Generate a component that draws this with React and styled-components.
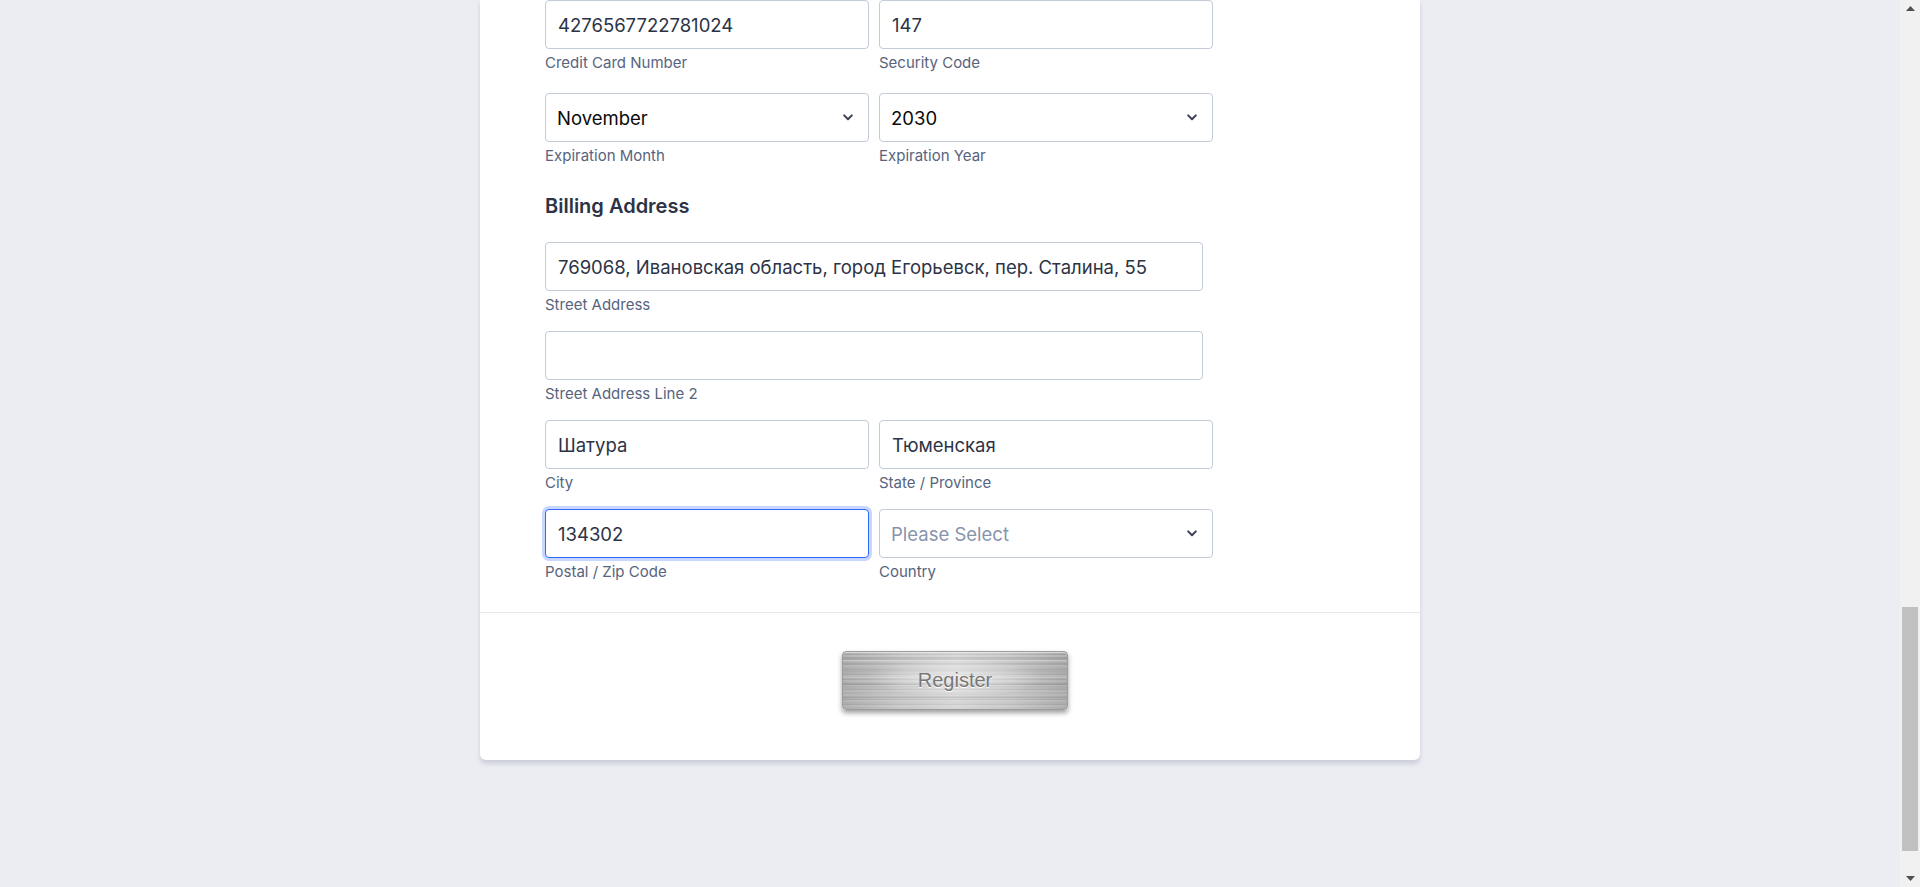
import React from 'react';
import styled, { createGlobalStyle } from 'styled-components';

const GlobalStyle = createGlobalStyle`
  html, body {
    margin: 0;
    height: 100%;
    overflow: hidden;
  }
  body {
    font-family: Inter, 'Noto Sans', sans-serif;
    color: #2c3345;
  }
  * {
    box-sizing: border-box;
  }
`;

const Screen = styled.div`
  display: flex;
  height: 100vh;
  overflow: hidden;
`;

const Main = styled.main`
  flex: 1;
  min-width: 0;
  background: #ecedf3;
`;

const Card = styled.form`
  width: 940px;
  margin: 0 auto;
  background: #fff;
  border-radius: 0 0 6px 6px;
  box-shadow: 0 4px 4px rgba(87, 100, 126, 0.21);
`;

const Section = styled.div`
  padding: 0 65px 14px;
`;

const SectionHeading = styled.h3`
  margin: 28px 0 23px;
  font-size: 20px;
  line-height: 26px;
  font-weight: 600;
  color: #2c3345;
`;

const Grid = styled.div`
  display: grid;
  grid-template-columns: 324px 334px;
  column-gap: 10px;
  row-gap: ${({ $gap }) => $gap}px;
  margin-bottom: ${({ $gap }) => $gap}px;
`;

const FieldBox = styled.div`
  display: flex;
  flex-direction: column;
  grid-column: ${({ $wide }) => ($wide ? '1 / -1' : 'auto')};
  width: ${({ $wide }) => ($wide ? '658px' : 'auto')};
`;

const TextInput = styled.input`
  width: 100%;
  height: 49px;
  padding: 0 12px;
  border: 1px solid ${({ $focused }) => ($focused ? '#2e69ff' : '#c3cad8')};
  border-radius: 4px;
  box-shadow: ${({ $focused }) => ($focused ? '0 0 0 3px #c8d7ff' : 'none')};
  background: #fff;
  outline: none;
  font-family: Inter, 'Noto Sans', sans-serif;
  font-size: 18.5px;
  color: #2c3345;
`;

const SelectWrap = styled.div`
  position: relative;
`;

const Select = styled.select`
  width: 100%;
  height: 49px;
  padding: 0 36px 0 11px;
  border: 1px solid #c3cad8;
  border-radius: 4px;
  background: #fff;
  appearance: none;
  outline: none;
  font-family: Inter, 'Noto Sans', sans-serif;
  font-size: 18.5px;
  color: ${({ $empty }) => ($empty ? '#8894ab' : '#0a0a0a')};
`;

const Chevron = styled.svg`
  position: absolute;
  right: 16px;
  top: 21px;
  pointer-events: none;
`;

const SubLabel = styled.span`
  margin-top: 5px;
  font-size: 15px;
  line-height: 18px;
  color: #57647e;
`;

const Footer = styled.div`
  display: flex;
  justify-content: center;
  padding: 38px 0 50px 10px;
  border-top: 1px solid #e6e7ee;
`;

const RegisterButton = styled.button`
  width: 226px;
  height: 59px;
  border: 1px solid #9c9c9c;
  border-radius: 4px;
  font-family: 'Liberation Sans', Arial, sans-serif;
  font-size: 20px;
  color: #777;
  text-shadow: 0 1px 0 #fff;
  cursor: pointer;
  background:
    radial-gradient(ellipse 55% 50% at 50% 45%, rgba(255, 255, 255, 0.5), rgba(255, 255, 255, 0) 70%),
    repeating-linear-gradient(180deg, rgba(0, 0, 0, 0) 0 2px, rgba(0, 0, 0, 0.05) 2px 3px, rgba(255, 255, 255, 0.1) 3px 5px),
    repeating-linear-gradient(180deg, rgba(0, 0, 0, 0) 0 5px, rgba(0, 0, 0, 0.07) 5px 7px, rgba(0, 0, 0, 0) 7px 13px),
    repeating-linear-gradient(180deg, rgba(255, 255, 255, 0) 0 8px, rgba(255, 255, 255, 0.22) 8px 9px, rgba(255, 255, 255, 0) 9px 17px),
    repeating-linear-gradient(180deg, rgba(0, 0, 0, 0) 0 11px, rgba(0, 0, 0, 0.06) 11px 12px, rgba(0, 0, 0, 0) 12px 23px),
    linear-gradient(90deg, #acacac, #c6c6c6 25%, #d6d6d6 50%, #c6c6c6 75%, #aaaaaa);
  box-shadow: 0 3px 5px rgba(0, 0, 0, 0.38), inset 0 1px 0 rgba(255, 255, 255, 0.5);
`;

/* page scrollbar, drawn since the page is shown scrolled down */
const ScrollRail = styled.div`
  display: flex;
  flex-direction: column;
  width: 20px;
  background: #f1f1f1;
`;

const RailButton = styled.div`
  display: flex;
  align-items: center;
  justify-content: center;
  height: 17px;
`;

const RailTrack = styled.div`
  flex: 1;
  padding: ${({ $offset }) => $offset}px 2px 0;
`;

const RailThumb = styled.div`
  height: ${({ $length }) => $length}px;
  background: #c1c1c1;
`;

const months = ['January', 'February', 'March', 'April', 'May', 'June', 'July', 'August', 'September', 'October', 'November', 'December'];
const years = ['2025', '2026', '2027', '2028', '2029', '2030', '2031', '2032'];

const SelectField = ({ value, options, placeholder }) => (
  <SelectWrap>
    <Select defaultValue={value || ''} $empty={!value}>
      {placeholder && <option value=''>{placeholder}</option>}
      {options.map(o => (
        <option key={o} value={o}>
          {o}
        </option>
      ))}
    </Select>
    <Chevron width='10' height='7' viewBox='0 0 10 7'>
      <path d='M1.2 1.4L5 5.2l3.8-3.8' fill='none' stroke='#3b4254' strokeWidth='2' strokeLinecap='round' strokeLinejoin='round' />
    </Chevron>
  </SelectWrap>
);

const Field = ({ sub, wide, children }) => (
  <FieldBox $wide={wide}>
    {children}
    {sub && <SubLabel>{sub}</SubLabel>}
  </FieldBox>
);

const Arrow = ({ down }) => (
  <svg width='9' height='5' viewBox='0 0 9 5'>
    <path d={down ? 'M0 0L4.5 5L9 0z' : 'M0 5L4.5 0L9 5z'} fill='#505050' />
  </svg>
);

const App = () => (
  <Screen>
    <GlobalStyle />
    <Main>
      <Card onSubmit={e => e.preventDefault()}>
        <Section>
          <Grid $gap={21}>
            <Field sub='Credit Card Number'>
              <TextInput defaultValue='4276567722781024' />
            </Field>
            <Field sub='Security Code'>
              <TextInput defaultValue='147' />
            </Field>
            <Field sub='Expiration Month'>
              <SelectField value='November' options={months} />
            </Field>
            <Field sub='Expiration Year'>
              <SelectField value='2030' options={years} />
            </Field>
          </Grid>

          <SectionHeading>Billing Address</SectionHeading>
          <Grid $gap={17}>
            <Field sub='Street Address' wide>
              <TextInput defaultValue='769068, Ивановская область, город Егорьевск, пер. Сталина, 55' />
            </Field>
            <Field sub='Street Address Line 2' wide>
              <TextInput />
            </Field>
            <Field sub='City'>
              <TextInput defaultValue='Шатура' />
            </Field>
            <Field sub='State / Province'>
              <TextInput defaultValue='Тюменская' />
            </Field>
            <Field sub='Postal / Zip Code'>
              <TextInput defaultValue='134302' $focused />
            </Field>
            <Field sub='Country'>
              <SelectField placeholder='Please Select' options={['Russia', 'Belarus', 'Kazakhstan']} />
            </Field>
          </Grid>
        </Section>

        <Footer>
          <RegisterButton type='submit'>Register</RegisterButton>
        </Footer>
      </Card>
    </Main>
    <ScrollRail>
      <RailButton>
        <Arrow />
      </RailButton>
      <RailTrack $offset={590}>
        <RailThumb $length={244} />
      </RailTrack>
      <RailButton>
        <Arrow down />
      </RailButton>
    </ScrollRail>
  </Screen>
);

export default App;
